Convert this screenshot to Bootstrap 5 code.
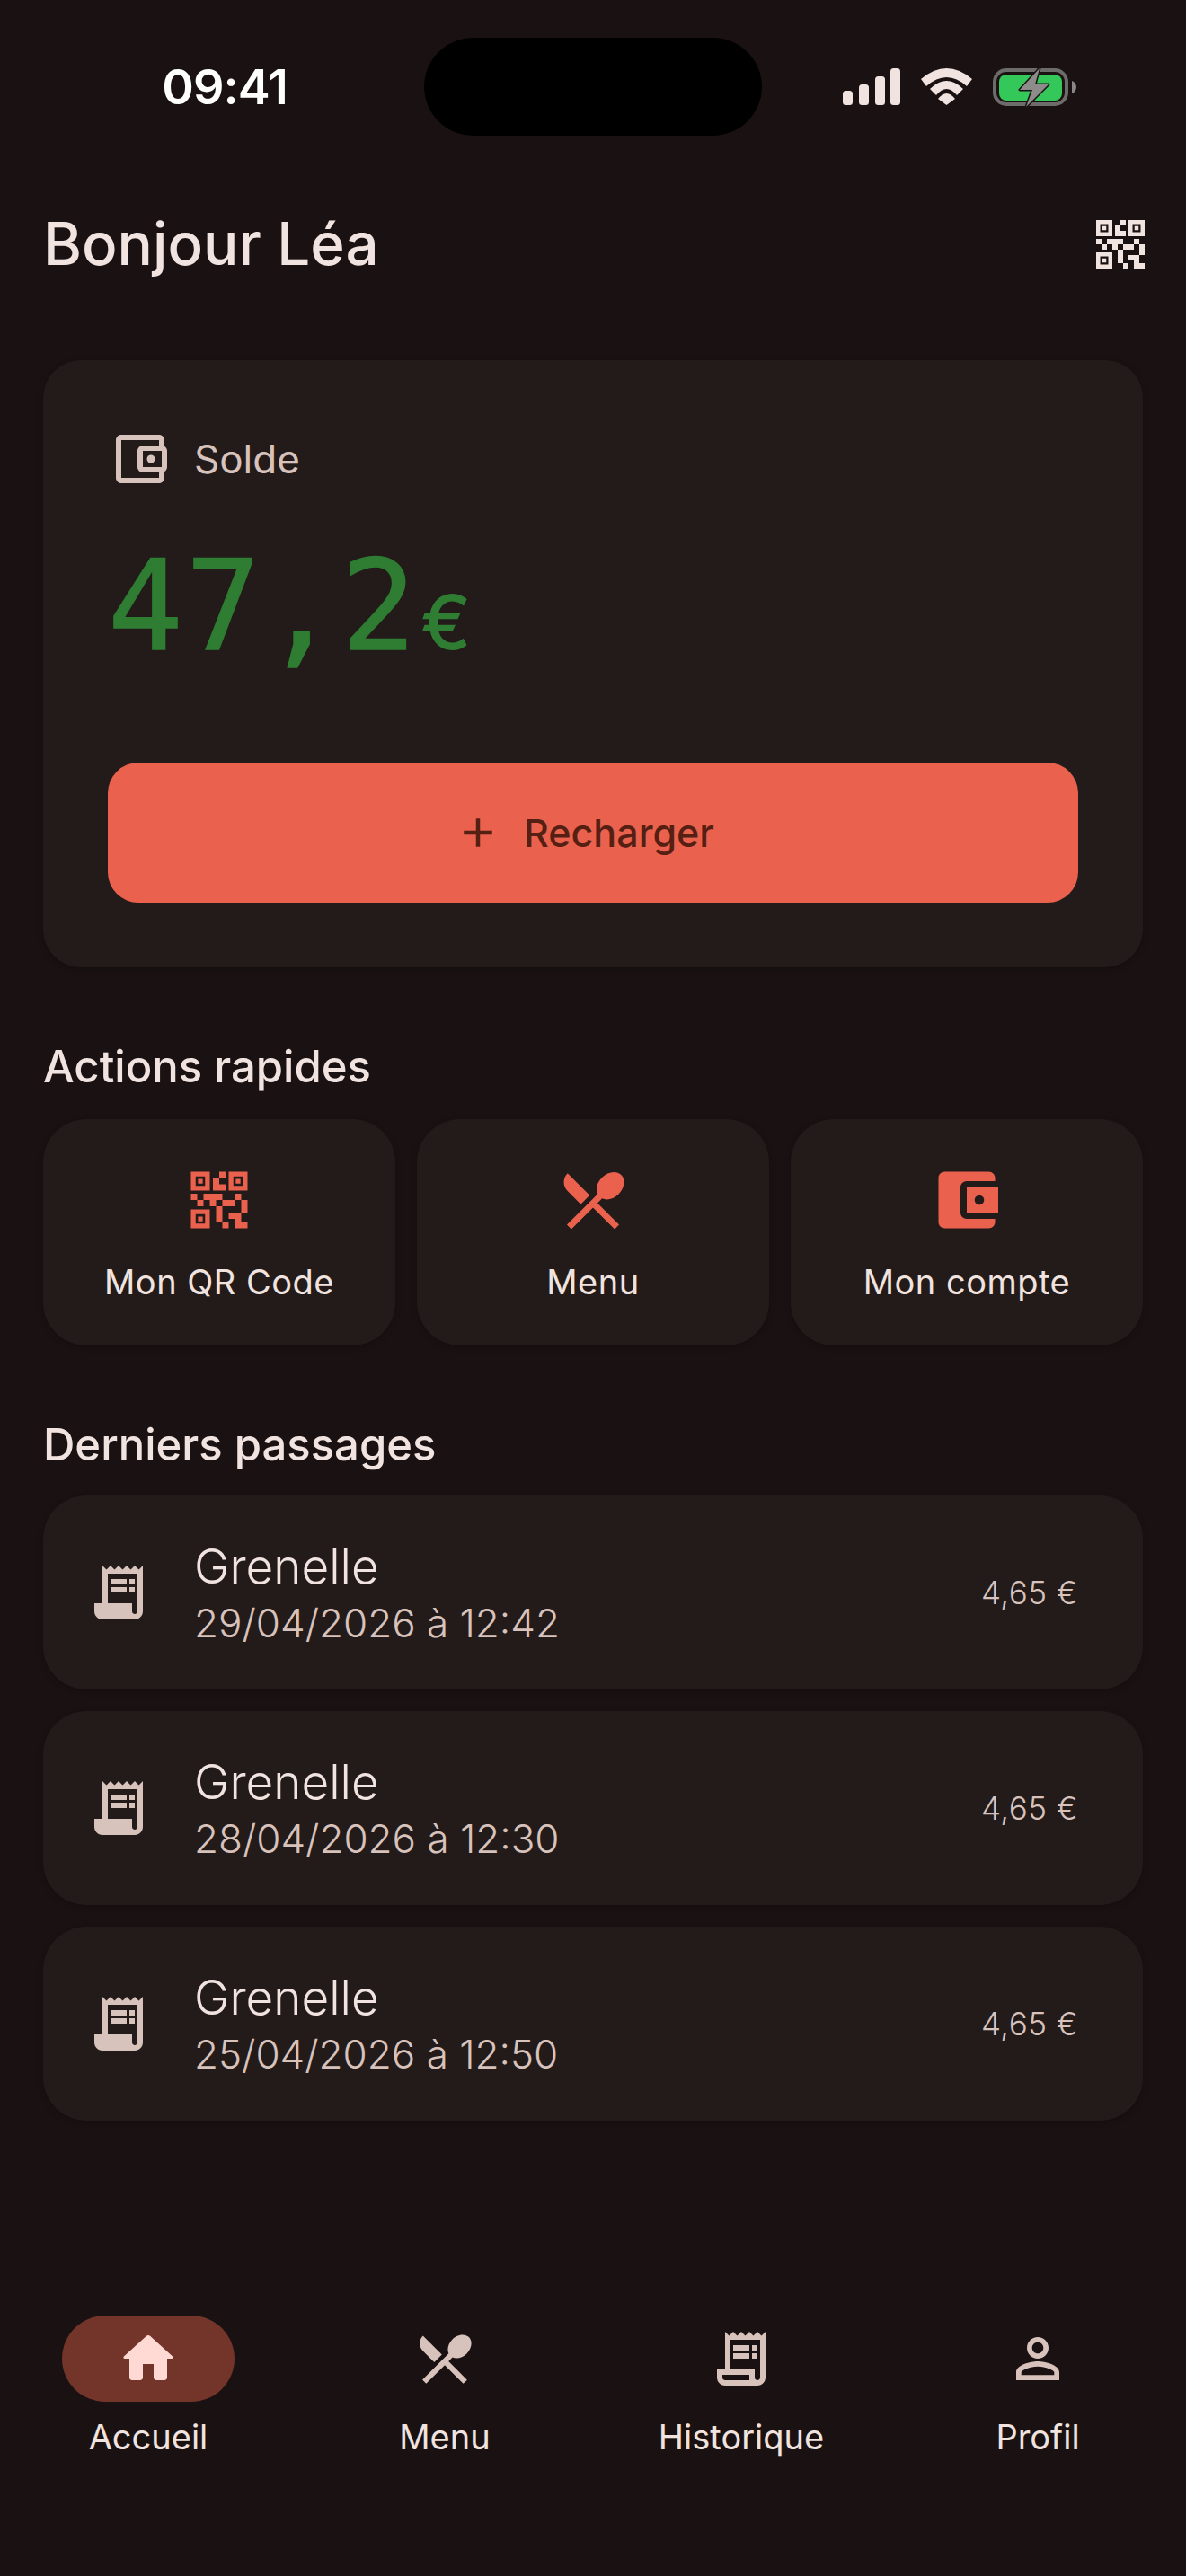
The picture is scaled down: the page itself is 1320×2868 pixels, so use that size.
<!doctype html>
<html lang="fr"><head><meta charset="utf-8"><title>Accueil</title>
<link href="https://cdn.jsdelivr.net/npm/bootstrap@5.3.0/dist/css/bootstrap.min.css" rel="stylesheet">
<style>
html,body{background:#1a1212}
body{font-family:"Inter","Liberation Sans",sans-serif;color:#f1e3df;margin:0}
svg{display:block;fill:currentColor;flex:none}
.screen{min-height:2868px;width:1320px}
.status-bar{height:193px}
.status-side{width:472px;height:151px;padding-top:42px}
.clock{font-size:54px;font-weight:600;color:#fff;text-align:center;letter-spacing:-1px;padding-left:28px;line-height:109px}
.island{width:376px;height:109px;margin-top:42px;background:#000;border-radius:55px}
.status-icons{padding-left:90px;gap:23px;height:109px;padding-top:34px}
.content{padding:0 48px}
.head{height:72px;margin-top:43px;margin-bottom:93px}
.title{font-size:65.5px;font-weight:500;line-height:1;margin:0}
.qr-btn{margin-right:-11px}
.panel{background:#231b1a;box-shadow:0 2px 6px rgba(0,0,0,.25)}
.balance{border-radius:42px;padding:74px 72px 72px}
.solde{gap:24px;color:#d8c2bc;font-size:44px;height:72px}
.amount{color:#2e7d32;height:110px;margin-top:73px;line-height:110px;white-space:nowrap}
.amount-num{font-family:"DejaVu Sans Mono",monospace;font-size:139px;letter-spacing:2.8px;-webkit-text-stroke:1.5px #2e7d32}
.amount-cur{font-size:84px;font-weight:500;margin-left:2px}
.topup{background:#ea624e;color:#561f13;height:156px;border-radius:34px;font-size:43px;font-weight:500;margin-top:119px;border:0;gap:24px;width:100%;padding:0 20px 0 0}
.topup:hover{background:#ea624e;color:#561f13}
.section-title{font-size:49px;font-weight:500;line-height:60px;margin:0;color:#f1e3df}
.sec-a{margin-top:81px;margin-bottom:28px}
.sec-b{margin-top:81px;margin-bottom:26px}
.tiles{display:grid;grid-template-columns:repeat(3,1fr);gap:24px}
.tile{border-radius:48px;height:252px;padding-top:48px;font-size:38px;letter-spacing:.5px;font-weight:400;gap:21px}
.tile svg{color:#ea624e}
.trow{border-radius:48px;height:216px;padding:0 72px 0 48px;gap:48px;margin-bottom:24px}
.trow svg{color:#d8c2bc}
.trow-text{padding-top:5px}
.place{font-size:53px;font-weight:300;line-height:63px}
.when{font-size:44px;font-weight:300;line-height:63px;color:#d8c2bc}
.price{font-size:35px;font-weight:300;color:#d8c2bc;letter-spacing:.5px}
.bottom-nav{margin-top:auto;height:290px}
.bn-item{width:330px;font-size:38px;color:#f1e3df;gap:11px}
.bn-pill{width:192px;height:96px;border-radius:48px;color:#d8c2bc}
.bn-item.on .bn-pill{background:#73352a;color:#ffdad4}
</style></head><body>
<div class="screen d-flex flex-column">
  <div class="status-bar d-flex">
    <div class="status-side"><div class="clock">09:41</div></div>
    <div class="island"></div>
    <div class="status-side"><div class="status-icons d-flex align-items-start">
      <svg width="64" height="41" viewBox="0 0 64 41" fill="#fff"><rect x="0" y="25" width="11" height="16" rx="3.5"/><rect x="18" y="18" width="11" height="23" rx="3.5"/><rect x="36" y="9" width="11" height="32" rx="3.5"/><rect x="53" y="0" width="11" height="41" rx="3.5"/></svg>
      <svg width="57" height="41" viewBox="0 0 57 41" fill="#fff"><path d="M0 12Q28.500-12 57 12L51 20Q28.500 0 6 20Z"/><path d="M10 23Q28.500 5 47 23L40 30Q28.500 16 17 30Z"/><path d="M19 34Q28.500 22 38 34L28.500 41Z"/></svg>
      <svg width="93" height="44" viewBox="0 -1 93 44" style="margin-top:-1px"><rect x="2" y="2" width="80" height="38" rx="13" fill="none" stroke="#6e6b6b" stroke-width="4"/><rect x="7" y="7" width="70" height="29" rx="8" fill="#34c759"/><path d="M88 14c3 1 5 4 5 7s-2 6-5 7z" fill="#8a8787"/><path d="M52 0L30 24H44L37 43L62 18H47Z" fill="#8e8b8b" stroke="#1a1212" stroke-width="3" stroke-linejoin="round" paint-order="stroke"/></svg>
    </div></div>
  </div>
  <div class="content">
    <div class="head d-flex align-items-center justify-content-between">
      <h1 class="title">Bonjour Léa</h1>
      <div class="qr-btn"><svg width="72" height="72" viewBox="0 0 24 24"><path d="M15,21h-2v-2h2V21z M13,14h-2v5h2V14z M21,12h-2v4h2V12z M19,10h-2v2h2V10z M7,12H5v2h2V12z M5,10H3v2h2V10z M12,5h2V3h-2V5z M4.500,4.500v3h3v-3H4.500z M9,9H3V3h6V9z M4.500,16.500v3h3v-3H4.500z M9,21H3v-6h6V21z M16.500,4.500v3h3v-3H16.500z M21,9h-6V3h6V9z M19,19v-3l-4,0v2h2v3h4v-2H19z M17,12l-4,0v2h4V12z M13,10H7v2h2v2h2v-2h2V10z M14,9V7h-2V5h-2v4L14,9z M6.750,5.250h-1.500v1.500h1.500V5.250z M6.750,17.250h-1.500v1.500h1.500V17.250z M18.750,5.250h-1.500v1.500h1.500V5.250z" fill="#f1e3df"/></svg></div>
    </div>
    <div class="panel balance">
      <div class="solde d-flex align-items-center">
        <svg width="72" height="72" viewBox="0 0 24 24"><path d="M21 7.280V5c0-1.100-.9-2-2-2H5c-1.110 0-2 .9-2 2v14c0 1.100.89 2 2 2h14c1.100 0 2-.9 2-2v-2.280c.59-.35 1-.98 1-1.720V9c0-.74-.41-1.380-1-1.720zM20 9v6h-7V9h7zM5 19V5h14v2h-6c-1.100 0-2 .9-2 2v6c0 1.100.9 2 2 2h6v2H5z"/><circle cx="16" cy="12" r="1.500"/></svg>
        <span>Solde</span>
      </div>
      <div class="amount"><span class="amount-num">47,2</span><span class="amount-cur">€</span></div>
      <button type="button" class="btn topup d-flex align-items-center justify-content-center"><svg width="54" height="54" viewBox="0 0 24 24"><path d="M19 13h-6v6h-2v-6H5v-2h6V5h2v6h6v2z"/></svg><span>Recharger</span></button>
    </div>
    <h2 class="section-title sec-a">Actions rapides</h2>
    <div class="tiles">
      <div class="panel tile d-flex flex-column align-items-center"><svg width="84" height="84" viewBox="0 0 24 24"><path d="M15,21h-2v-2h2V21z M13,14h-2v5h2V14z M21,12h-2v4h2V12z M19,10h-2v2h2V10z M7,12H5v2h2V12z M5,10H3v2h2V10z M12,5h2V3h-2V5z M4.500,4.500v3h3v-3H4.500z M9,9H3V3h6V9z M4.500,16.500v3h3v-3H4.500z M9,21H3v-6h6V21z M16.500,4.500v3h3v-3H16.500z M21,9h-6V3h6V9z M19,19v-3l-4,0v2h2v3h4v-2H19z M17,12l-4,0v2h4V12z M13,10H7v2h2v2h2v-2h2V10z M14,9V7h-2V5h-2v4L14,9z M6.750,5.250h-1.500v1.500h1.500V5.250z M6.750,17.250h-1.500v1.500h1.500V17.250z M18.750,5.250h-1.500v1.500h1.500V5.250z"/></svg><span>Mon QR Code</span></div>
      <div class="panel tile d-flex flex-column align-items-center"><svg width="84" height="84" viewBox="0 0 24 24"><path d="M8.100 13.340l2.830-2.830L3.910 3.500c-1.560 1.560-1.560 4.090 0 5.660l4.190 4.180zm6.780-1.810c1.530.71 3.680.21 5.270-1.380 1.910-1.910 2.280-4.650.81-6.120-1.460-1.460-4.200-1.100-6.120.81-1.590 1.590-2.090 3.740-1.380 5.270L3.700 19.870l1.410 1.410L12 14.410l6.880 6.880 1.410-1.410L13.410 13l1.470-1.470z"/></svg><span>Menu</span></div>
      <div class="panel tile d-flex flex-column align-items-center"><svg width="84" height="84" viewBox="0 0 24 24"><path d="M21 18v1c0 1.100-.9 2-2 2H5c-1.110 0-2-.9-2-2V5c0-1.100.89-2 2-2h14c1.100 0 2 .9 2 2v1h-9c-1.110 0-2 .9-2 2v8c0 1.100.89 2 2 2h9zm-9-2h10V8H12v8zm4-2.500c-.83 0-1.500-.67-1.500-1.500s.67-1.500 1.500-1.500 1.500.67 1.500 1.500-.67 1.500-1.500 1.500z"/></svg><span>Mon compte</span></div>
    </div>
    <h2 class="section-title sec-b">Derniers passages</h2>
    <div class="panel trow d-flex align-items-center"><svg width="72" height="72" viewBox="0 0 24 24"><path d="M19.500 3.500L18 2l-1.500 1.500L15 2l-1.500 1.500L12 2l-1.500 1.500L9 2 7.500 3.500 6 2v14H3v3c0 1.660 1.340 3 3 3h12c1.660 0 3-1.340 3-3V2l-1.500 1.500zM19 19c0 .55-.45 1-1 1s-1-.45-1-1v-3H8V5h11v14z"/><path d="M9 7h6v2H9zM16 7h2v2h-2zM9 10h6v2H9zM16 10h2v2h-2z"/></svg><div class="flex-grow-1 trow-text"><div class="place">Grenelle</div><div class="when">29/04/2026 à 12:42</div></div><div class="price">4,65 €</div></div>
    <div class="panel trow d-flex align-items-center"><svg width="72" height="72" viewBox="0 0 24 24"><path d="M19.500 3.500L18 2l-1.500 1.500L15 2l-1.500 1.500L12 2l-1.500 1.500L9 2 7.500 3.500 6 2v14H3v3c0 1.660 1.340 3 3 3h12c1.660 0 3-1.340 3-3V2l-1.500 1.500zM19 19c0 .55-.45 1-1 1s-1-.45-1-1v-3H8V5h11v14z"/><path d="M9 7h6v2H9zM16 7h2v2h-2zM9 10h6v2H9zM16 10h2v2h-2z"/></svg><div class="flex-grow-1 trow-text"><div class="place">Grenelle</div><div class="when">28/04/2026 à 12:30</div></div><div class="price">4,65 €</div></div>
    <div class="panel trow d-flex align-items-center"><svg width="72" height="72" viewBox="0 0 24 24"><path d="M19.500 3.500L18 2l-1.500 1.500L15 2l-1.500 1.500L12 2l-1.500 1.500L9 2 7.500 3.500 6 2v14H3v3c0 1.660 1.340 3 3 3h12c1.660 0 3-1.340 3-3V2l-1.500 1.500zM19 19c0 .55-.45 1-1 1s-1-.45-1-1v-3H8V5h11v14z"/><path d="M9 7h6v2H9zM16 7h2v2h-2zM9 10h6v2H9zM16 10h2v2h-2z"/></svg><div class="flex-grow-1 trow-text"><div class="place">Grenelle</div><div class="when">25/04/2026 à 12:50</div></div><div class="price">4,65 €</div></div>
  </div>
  <nav class="bottom-nav d-flex">
    <div class="bn-item on d-flex flex-column align-items-center"><div class="bn-pill d-flex align-items-center justify-content-center"><svg width="72" height="72" viewBox="0 0 24 24"><path d="M10 19v-5h4v5c0 .55.45 1 1 1h3c.55 0 1-.45 1-1v-7h1.700c.46 0 .68-.57.33-.87L12.670 3.600c-.38-.34-.96-.34-1.340 0l-8.360 7.530c-.34.3-.13.87.33.87H5v7c0 .55.45 1 1 1h3c.55 0 1-.45 1-1z"/></svg></div><span>Accueil</span></div>
    <div class="bn-item d-flex flex-column align-items-center"><div class="bn-pill d-flex align-items-center justify-content-center"><svg width="72" height="72" viewBox="0 0 24 24"><path d="M8.100 13.340l2.830-2.830L3.910 3.500c-1.560 1.560-1.560 4.090 0 5.660l4.190 4.180zm6.780-1.810c1.530.71 3.680.21 5.270-1.380 1.910-1.910 2.280-4.650.81-6.120-1.460-1.460-4.200-1.100-6.120.81-1.590 1.590-2.090 3.740-1.380 5.270L3.700 19.870l1.410 1.410L12 14.410l6.880 6.880 1.410-1.410L13.410 13l1.470-1.470z"/></svg></div><span>Menu</span></div>
    <div class="bn-item d-flex flex-column align-items-center"><div class="bn-pill d-flex align-items-center justify-content-center"><svg width="72" height="72" viewBox="0 0 24 24"><path d="M19.500 3.500L18 2l-1.500 1.500L15 2l-1.500 1.500L12 2l-1.500 1.500L9 2 7.500 3.500 6 2v14H3v3c0 1.660 1.340 3 3 3h12c1.660 0 3-1.340 3-3V2L19.500 3.500z M15 20H6c-.55 0-1-.45-1-1v-1h10V20z M19 19c0 .55-.45 1-1 1s-1-.45-1-1v-3H8V5h11V19z"/><path d="M9 7h6v2H9zM16 7h2v2h-2zM9 10h6v2H9zM16 10h2v2h-2z"/></svg></div><span>Historique</span></div>
    <div class="bn-item d-flex flex-column align-items-center"><div class="bn-pill d-flex align-items-center justify-content-center"><svg width="72" height="72" viewBox="0 0 24 24"><path d="M12 5.900c1.160 0 2.100.94 2.100 2.100s-.94 2.100-2.100 2.100S9.900 9.160 9.900 8s.94-2.100 2.100-2.100m0 9c2.970 0 6.100 1.460 6.100 2.100v1.100H5.900V17c0-.64 3.130-2.100 6.100-2.100M12 4C9.790 4 8 5.790 8 8s1.790 4 4 4 4-1.790 4-4-1.790-4-4-4zm0 9c-2.670 0-8 1.340-8 4v3h16v-3c0-2.660-5.330-4-8-4z"/></svg></div><span>Profil</span></div>
  </nav>
</div>
</body></html>
